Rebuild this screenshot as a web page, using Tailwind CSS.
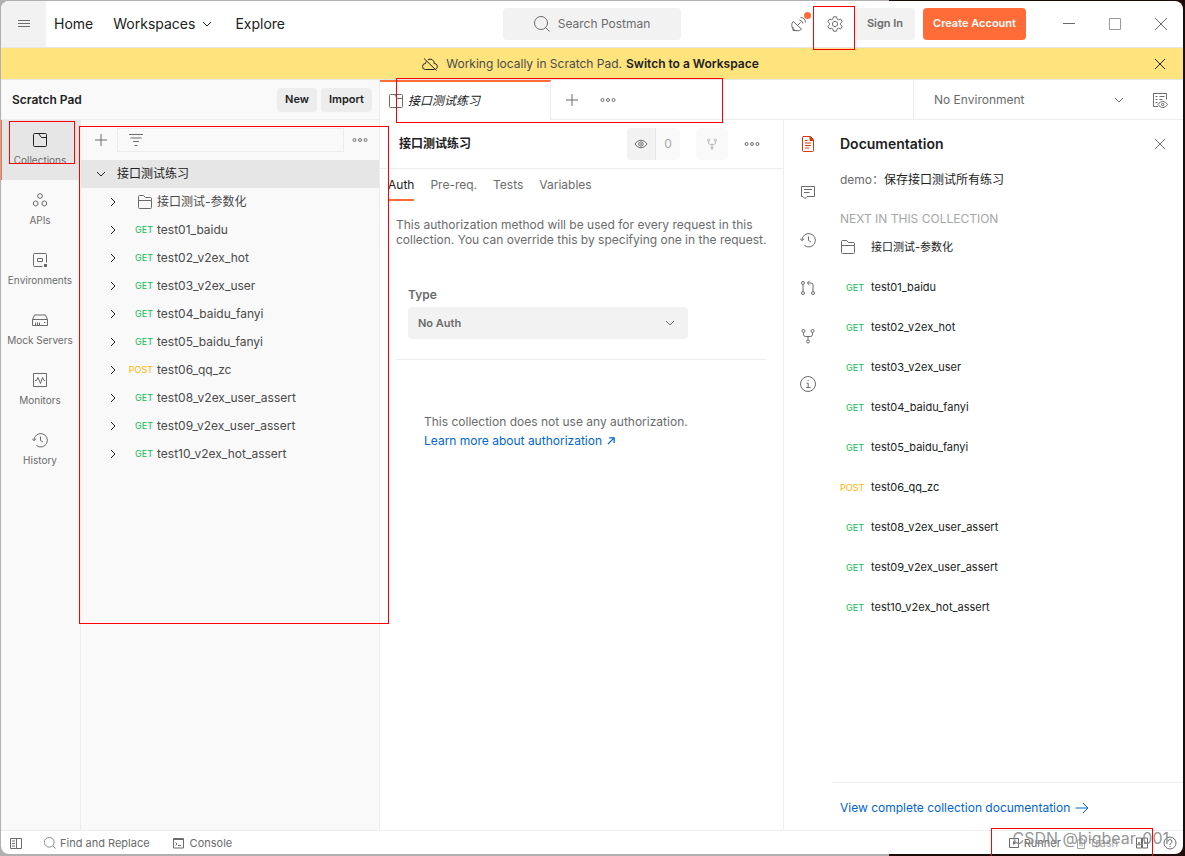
<!DOCTYPE html>
<html lang="en">
<head>
    <meta charset="UTF-8" />
    <meta name="viewport" content="width=device-width, initial-scale=1.0"/>
    <title>Scratch Pad</title>
    <script src="https://cdn.jsdelivr.net/npm/@tailwindcss/browser@4"></script>
    <style>
        body { font-family: Inter, 'Noto Sans CJK SC', sans-serif; }
        svg { fill: none; stroke: currentColor; }
    </style>
</head>
<body class="relative flex flex-col min-h-screen pt-px pl-px pr-0.5 pb-0.5 text-xs text-[#6b6b6b] bg-[linear-gradient(90deg,#b0b0b0_75%,#1d0d0a_75%)]">

    <!-- Icon set -->
    <svg class="hidden">
        <symbol id="chevron-down" viewBox="0 0 16 16"><path d="M4 6l4 4 4-4"/></symbol>
        <symbol id="chevron-right" viewBox="0 0 16 16"><path d="M6 4l4 4-4 4"/></symbol>
        <symbol id="plus" viewBox="0 0 16 16"><path d="M8 2v12M2 8h12"/></symbol>
        <symbol id="close" viewBox="0 0 16 16"><path d="M3 3l10 10M13 3L3 13"/></symbol>
        <symbol id="dots" viewBox="0 0 16 16"><circle cx="2.500" cy="8" r="1.500"/><circle cx="8" cy="8" r="1.500"/><circle cx="13.500" cy="8" r="1.500"/></symbol>
        <symbol id="search" viewBox="0 0 16 16"><circle cx="7" cy="7" r="6.500"/><path d="M11.500 11.500l4 4"/></symbol>
        <symbol id="menu" viewBox="0 0 16 16"><path d="M2 4.500h12M2 7.500h12M2 10.500h12"/></symbol>
        <symbol id="collection" viewBox="0 0 16 16"><path d="M2.500 1.500h11a1 1 0 0 1 1 1v11a1 1 0 0 1-1 1h-11a1 1 0 0 1-1-1v-11a1 1 0 0 1 1-1zM6.500 1.500l3 4h5"/></symbol>
        <symbol id="folder" viewBox="0 0 16 16"><path d="M1.500 6.500h13v7a1 1 0 0 1-1 1h-11a1 1 0 0 1-1-1v-11a1 1 0 0 1 1-1h4l2 2h5a1 1 0 0 1 1 1v2"/></symbol>
        <symbol id="apis" viewBox="0 0 16 16"><path d="M8 1.500l2.200 1.200v2.600L8 6.500 5.800 5.300V2.700zM3.700 8.800l2.200 1.200v2.800L3.700 14l-2.200-1.200V10zM12.300 8.800l2.200 1.200v2.800L12.300 14l-2.200-1.200V10z"/></symbol>
        <symbol id="environments" viewBox="0 0 16 16"><path d="M10.500 14.500h-8a1 1 0 0 1-1-1v-11a1 1 0 0 1 1-1h11a1 1 0 0 1 1 1v8M5.500 6.500h5v3h-5z"/><path d="M12 12h3v3h-3z" fill="currentColor" stroke="none"/></symbol>
        <symbol id="mock" viewBox="0 0 16 16"><path d="M.5 7.500l2-4.500h11l2 4.500v6H.5zM.5 7.500h15M3.500 13.500v-3M5.500 13.500v-3M7.500 13.500v-3M12 10.500h1.500"/></symbol>
        <symbol id="monitor" viewBox="0 0 16 16"><path d="M1.500 1.500h13v13h-13zM3 8.500h1.500l1.500-3 2.500 6 2-6 1.500 3h1"/></symbol>
        <symbol id="history" viewBox="0 0 16 16"><path d="M2 8.500A6.700 6.700 0 1 1 4.500 13.500M0 6.500l2 2.200 2.200-2M8.500 4.500V8.500l2.500 1.500"/></symbol>
        <symbol id="filter" viewBox="0 0 16 16"><path d="M1 2.500h14M2.500 6h11M5 9.500h6M6.500 13.500h3"/></symbol>
        <symbol id="cloud-off" viewBox="0 0 16 16"><path d="M4.500 5.300A3 3 0 0 0 3.500 7.500 3 3 0 0 0 3.500 13.500h9M6 3.800A4 4 0 0 1 12.200 7.500 3 3 0 0 1 14 13M2 2.500l12.500 12"/></symbol>
        <symbol id="satellite" viewBox="0 0 16 16"><path d="M2.200 5.500A5.300 5.300 0 0 0 10.500 13zM6.500 9.500l3-3M2 11v3.500h4M8.500 4A4.500 4.500 0 0 1 12 7.500M9.500 1.300A6 6 0 0 1 14.700 6.500"/></symbol>
        <symbol id="gear" viewBox="0 0 16 16"><path d="M6.500.8h3l.5 2.100 1.500.9 2.100-.7 1.500 2.600-1.600 1.500v1.600l1.600 1.500-1.500 2.600-2.100-.7-1.500.9-.5 2.100h-3L6 13.100l-1.500-.9-2.100.7-1.500-2.600 1.600-1.500V7.200L.9 5.700l1.500-2.600 2.100.7L6 2.900z"/><circle cx="8" cy="8" r="2.600"/></symbol>
        <symbol id="env-quick" viewBox="0 0 16 16"><path d="M6 14.500H1.500v-13h13v6M3.500 4.500h2M7.500 4.500h5M3.500 7.500h2M7.500 7.500h3M3.500 10.500h2M6 12.500c2.500-4 7-4 9.500 0-2.500 4-7 4-9.500 0z"/><circle cx="10.700" cy="12.500" r="1.200"/></symbol>
        <symbol id="eye" viewBox="0 0 16 16"><path d="M2 8c3-5 9-5 12 0-3 5-9 5-12 0z"/><circle cx="8" cy="8" r="2.200"/><circle cx="8" cy="8" r=".5"/></symbol>
        <symbol id="fork" viewBox="0 0 16 16"><circle cx="3.500" cy="3" r="1.500"/><circle cx="12.500" cy="3" r="1.500"/><circle cx="8" cy="13.500" r="1.500"/><path d="M3.500 4.500v2a2 2 0 0 0 2 2h5a2 2 0 0 0 2-2v-2M8 8.500V12"/></symbol>
        <symbol id="doc" viewBox="0 0 16 16"><path d="M3 .5h7.500l3 3V14.500a1 1 0 0 1-1 1H3.500a1 1 0 0 1-1-1v-13a1 1 0 0 1 .5-1zM5 4.500h2.500M5 7h6M5 9.500h6M5 12h4"/><path d="M10 .5v4h3.500z" fill="currentColor"/></symbol>
        <symbol id="comment" viewBox="0 0 16 16"><path d="M1.500 2.500h13v10H7l-2 2-2-2H1.500zM4 5.500h8M4 8.500h5.500"/></symbol>
        <symbol id="pull" viewBox="0 0 16 16"><circle cx="3" cy="3" r="1.500"/><circle cx="3" cy="13" r="1.500"/><circle cx="13" cy="13" r="1.500"/><path d="M3 4.500v7M13 11.500V5a2 2 0 0 0-2-2H7.500M9.500.8L7.300 3l2.200 2.200"/></symbol>
        <symbol id="info" viewBox="0 0 16 16"><circle cx="8" cy="8" r="7.500"/><path d="M6.500 7.200H8.200V11.500M6 11.500h4.500M7.500 4.700h1.200"/></symbol>
        <symbol id="arrow-out" viewBox="0 0 16 16"><path d="M3 13L13 3M5 3h8v8" stroke-width="2"/></symbol>
        <symbol id="arrow-right" viewBox="0 0 16 16"><path d="M1.500 8h12.500M9 3l5 5-5 5"/></symbol>
        <symbol id="sidebar" viewBox="0 0 16 16"><path d="M2.500 3.500h11v10h-11zM8.500 3.500v10M4 6h3M4 8.500h3M4 11h3"/></symbol>
        <symbol id="console" viewBox="0 0 16 16"><path d="M3.500 3.500h10v9.500h-10zM3.500 4.500h10M5.500 7.500l1.500 1.500-1.500 1.500M8 10.500h3"/></symbol>
        <symbol id="runner" viewBox="0 0 16 16"><path d="M3.500 3.500h9v9h-9z"/><path d="M7 6l3.200 2L7 10z" fill="currentColor" stroke="none"/></symbol>
        <symbol id="trash" viewBox="0 0 16 16"><path d="M4 5h8M6.500 5V3.500h3V5M4.500 5v8.500h7V5M7 7.500v4M9 7.500v4"/></symbol>
        <symbol id="panes" viewBox="0 0 16 16"><path d="M2.500 3h5v10h-5zM8.500 3h5v10h-5zM4 8h2M10 8h2M5 7v2M11 7v2"/></symbol>
        <symbol id="help" viewBox="0 0 16 16"><circle cx="8" cy="8" r="6"/><path d="M6 6.500a2 2 0 1 1 2.500 2L8 9v1M8 11v1"/></symbol>
    </svg>

    <div class="flex flex-col grow overflow-hidden rounded-lg bg-white">

        <!-- Title bar -->
        <header class="flex items-center h-[47px] shrink-0 border-b border-[#e6e6e6] text-sm text-[#212121]">
            <div class="flex flex-1 items-center h-full">
                <button class="flex items-center justify-center w-[45px] h-full bg-[#f2f2f2] text-[#6b6b6b]" aria-label="Menu"><svg class="size-4"><use href="#menu"/></svg></button>
                <nav class="flex items-center pl-2">
                    <a href="#">Home</a>
                    <a href="#" class="flex items-center gap-1 ml-5">Workspaces <svg class="size-4"><use href="#chevron-down"/></svg></a>
                    <a href="#" class="ml-5">Explore</a>
                </nav>
            </div>
            <button class="flex items-center justify-center gap-2 w-[178px] h-8 rounded bg-[#f2f2f2] text-xs text-[#6b6b6b]"><svg class="size-4"><use href="#search"/></svg>Search Postman</button>
            <div class="flex flex-1 items-center justify-end text-[#6b6b6b]">
                <button class="relative mr-5" aria-label="Capture"><svg class="size-4"><use href="#satellite"/></svg><span class="absolute -top-1 -right-1 size-[7px] rounded-full bg-[#ff6c37]"></span></button>
                <button class="mr-3" aria-label="Settings"><svg class="size-4"><use href="#gear"/></svg></button>
                <button class="w-[60px] h-8 mr-2 rounded bg-[#f2f2f2] text-[11px] font-semibold">Sign In</button>
                <button class="w-[103px] h-8 mr-[35px] rounded bg-[#ff6c37] text-[11px] font-semibold text-white">Create Account</button>
                <button class="mr-[30px]" aria-label="Minimize"><svg class="size-4"><path d="M2 7.500h12"/></svg></button>
                <button class="mr-[30px] text-[#999]" aria-label="Maximize"><svg class="size-4"><path d="M2.500 2.500h11v11h-11z"/></svg></button>
                <button class="mr-[14px]" aria-label="Close"><svg class="size-4"><path d="M2 2l12 12M14 2L2 14"/></svg></button>
            </div>
        </header>

        <!-- Scratch pad notice -->
        <div class="flex items-center h-8 shrink-0 border-b border-[#e6e6e6] bg-[#ffe47e] text-[#212121]">
            <p class="flex flex-1 items-center justify-center pl-7 text-[#4a4a4a]"><svg class="size-4 mr-2 text-[#212121]"><use href="#cloud-off"/></svg>Working locally in Scratch Pad.<a href="#" class="ml-1 font-semibold text-[#212121]">Switch to a Workspace</a></p>
            <button class="mr-[15px]" aria-label="Dismiss"><svg class="size-4"><use href="#close"/></svg></button>
        </div>

        <div class="flex grow">
            <!-- Sidebar -->
            <aside class="flex flex-col w-[379px] shrink-0 border-r border-[#ededed] bg-[#f9f9f9]">
                <div class="flex items-center h-10 pl-[11px] pr-[7px] gap-1 border-b border-[#ededed] text-[#212121]">
                    <h1 class="grow font-semibold">Scratch Pad</h1>
                    <button class="w-10 h-6 rounded bg-[#ededed] text-[11px] font-semibold">New</button>
                    <button class="w-[51px] h-6 rounded bg-[#ededed] text-[11px] font-semibold">Import</button>
                </div>
                <div class="flex grow">
                    <nav id="rail" class="w-20 shrink-0 border-r border-[#ededed] text-[10px]"></nav>
                    <div class="grow">
                        <div class="flex items-center h-10 pl-3 pr-[11px]">
                            <button aria-label="Add"><svg class="size-4"><use href="#plus"/></svg></button>
                            <label class="relative grow mx-2">
                                <svg class="absolute top-1 left-[11px] size-4"><use href="#filter"/></svg>
                                <input type="text" aria-label="Filter collections" class="block w-full h-6 pl-9 border border-[#ededed] bg-transparent">
                            </label>
                            <button aria-label="More"><svg class="size-4"><use href="#dots"/></svg></button>
                        </div>
                        <div class="flex items-center h-7 pl-3 bg-[#e6e6e6] text-[#212121]"><svg class="size-4 mr-2"><use href="#chevron-down"/></svg>接口测试练习</div>
                        <ul id="tree" class="text-[#4a4a4a]"></ul>
                    </div>
                </div>
            </aside>

            <div class="flex flex-col grow">
                <!-- Tab bar -->
                <div class="flex h-10 shrink-0">
                    <a href="#" class="flex items-center gap-1 w-[171px] pl-2 border-t-2 border-t-[#ff6c37] border-r border-r-[#ededed] italic text-[#212121]"><svg class="size-4 text-[#6b6b6b]"><use href="#collection"/></svg>接口测试练习</a>
                    <div class="flex grow items-center gap-5 pl-[13px] border-b border-[#ededed]">
                        <button aria-label="New tab"><svg class="size-4"><use href="#plus"/></svg></button>
                        <button aria-label="Tab options"><svg class="size-4"><use href="#dots"/></svg></button>
                    </div>
                    <div class="flex items-center w-[270px] border-l border-b border-[#ededed]">
                        <div class="relative grow">
                            <select aria-label="Environment" class="appearance-none w-full h-8 pl-5"><option>No Environment</option></select>
                            <svg class="absolute top-2 right-[10px] size-4 pointer-events-none"><use href="#chevron-down"/></svg>
                        </div>
                        <button class="mx-[15px]" aria-label="Environment quick look"><svg class="size-4"><use href="#env-quick"/></svg></button>
                    </div>
                </div>

                <div class="flex grow">
                    <!-- Collection -->
                    <main class="grow">
                        <div class="flex items-center h-[49px] pl-[19px] pr-[23px] border-b border-[#ededed]">
                            <h2 class="grow font-bold text-[#212121]">接口测试练习</h2>
                            <button class="flex items-center justify-center w-[29px] h-8 rounded-l border-r border-[#e6e6e6] bg-[#f2f2f2]" aria-label="Watch"><svg class="size-4"><use href="#eye"/></svg></button>
                            <span class="flex items-center justify-center w-6 h-8 mr-4 rounded-r bg-[#f9f9f9] text-[#a6a6a6]">0</span>
                            <button class="flex items-center justify-center w-8 h-8 mr-4 rounded bg-[#f9f9f9] text-[#a6a6a6]" aria-label="Fork"><svg class="size-3"><use href="#fork"/></svg></button>
                            <button aria-label="More actions"><svg class="size-4"><use href="#dots"/></svg></button>
                        </div>
                        <nav class="flex gap-4 h-8 pl-2 leading-8">
                            <a href="#" class="border-b-2 border-[#ff6c37] text-[#212121]">Auth</a>
                            <a href="#">Pre-req.</a>
                            <a href="#">Tests</a>
                            <a href="#">Variables</a>
                        </nav>
                        <p class="w-[380px] mt-4 ml-4 leading-[15px]">This authorization method will be used for every request in this collection. You can override this by specifying one in the request.</p>
                        <div class="mx-4 mt-9 pl-3 pb-5 border-b border-[#ededed]">
                            <label for="auth-type" class="block font-semibold leading-6">Type</label>
                            <div class="relative w-[280px]">
                                <select id="auth-type" class="appearance-none block w-full h-8 pl-[10px] rounded bg-[#f2f2f2] text-[11px] font-semibold"><option>No Auth</option></select>
                                <svg class="absolute top-2 right-[10px] size-4 pointer-events-none"><use href="#chevron-down"/></svg>
                            </div>
                        </div>
                        <div class="mt-[52px] pl-11 leading-[19px]">
                            <p>This collection does not use any authorization.</p>
                            <a href="#" class="flex items-center gap-1 text-[#0265d2]">Learn more about authorization <svg class="size-[10px]"><use href="#arrow-out"/></svg></a>
                        </div>
                    </main>

                    <!-- Documentation -->
                    <section class="flex w-[400px] shrink-0 border-l border-[#ededed]">
                        <nav class="flex flex-col gap-8 w-12 pt-4 items-center">
                            <button class="text-[#d13a0a]" aria-label="Documentation"><svg class="size-4"><use href="#doc"/></svg></button>
                            <button aria-label="Comments"><svg class="size-4"><use href="#comment"/></svg></button>
                            <button aria-label="Changelog"><svg class="size-4"><use href="#history"/></svg></button>
                            <button aria-label="Pull requests"><svg class="size-4"><use href="#pull"/></svg></button>
                            <button aria-label="Forks"><svg class="size-4"><use href="#fork"/></svg></button>
                            <button aria-label="Info"><svg class="size-4"><use href="#info"/></svg></button>
                        </nav>
                        <div class="flex flex-col grow">
                            <div class="grow pl-2">
                                <div class="flex items-center justify-between h-12 pr-[15px]">
                                    <h2 class="text-sm font-semibold text-[#212121]">Documentation</h2>
                                    <button aria-label="Close panel"><svg class="size-4"><use href="#close"/></svg></button>
                                </div>
                                <p class="leading-6">demo：<span class="text-[#212121]">保存接口测试所有练习</span></p>
                                <h3 class="mt-[15px] leading-6 text-[#a6a6a6]">NEXT IN THIS COLLECTION</h3>
                                <ul id="next" class="text-[11px] text-[#212121]"></ul>
                            </div>
                            <a href="#" class="flex items-center gap-1 h-12 pl-2 pt-0.5 border-t border-[#ededed] text-[#0265d2]">View complete collection documentation <svg class="size-4"><use href="#arrow-right"/></svg></a>
                        </div>
                    </section>
                </div>
            </div>
        </div>

        <!-- Status bar -->
        <footer class="flex items-center h-6 shrink-0 pt-px pl-[7px] pr-[5px] border-t border-[#ededed] text-[11px]">
            <button aria-label="Toggle sidebar"><svg class="size-4"><use href="#sidebar"/></svg></button>
            <button class="flex items-center gap-1 ml-5"><svg class="size-3"><use href="#search"/></svg>Find and Replace</button>
            <button class="flex items-center gap-1 ml-5"><svg class="size-4"><use href="#console"/></svg>Console</button>
            <button class="flex items-center gap-0.5 ml-auto"><svg class="size-4"><use href="#runner"/></svg>Runner</button>
            <button class="flex items-center ml-3 text-[#a6a6a6]"><svg class="size-4"><use href="#trash"/></svg>Trash</button>
            <button class="ml-4" aria-label="Two pane view"><svg class="size-4"><use href="#panes"/></svg></button>
            <button class="ml-3" aria-label="Help"><svg class="size-4"><use href="#help"/></svg></button>
        </footer>
    </div>

    <!-- Highlight frames and watermark -->
    <div class="absolute left-[9px] top-[121px] w-[66px] h-[43px] border border-[#f00] pointer-events-none"></div>
    <div class="absolute left-[79px] top-[126px] w-[310px] h-[498px] border border-[#f00] pointer-events-none"></div>
    <div class="absolute left-[396px] top-[78px] w-[327px] h-[45px] border border-[#f00] pointer-events-none"></div>
    <div class="absolute right-[330px] top-[6px] w-[42px] h-[44px] border border-[#f00] pointer-events-none"></div>
    <div class="absolute right-8 bottom-0 w-[162px] h-7 border border-b-0 border-[#f00] pointer-events-none"></div>
    <div class="absolute right-4 bottom-2 text-base leading-5 text-[#888]/90 pointer-events-none">CSDN @bigbear_001</div>

    <script>
        const sections = [
            ["collection", "Collections"],
            ["apis", "APIs"],
            ["environments", "Environments"],
            ["mock", "Mock Servers"],
            ["monitor", "Monitors"],
            ["history", "History"]
        ];

        const requests = [
            ["", "接口测试-参数化"],
            ["GET", "test01_baidu"],
            ["GET", "test02_v2ex_hot"],
            ["GET", "test03_v2ex_user"],
            ["GET", "test04_baidu_fanyi"],
            ["GET", "test05_baidu_fanyi"],
            ["POST", "test06_qq_zc"],
            ["GET", "test08_v2ex_user_assert"],
            ["GET", "test09_v2ex_user_assert"],
            ["GET", "test10_v2ex_hot_assert"]
        ];

        const folder = `<svg class="size-4 shrink-0 text-[#6b6b6b]"><use href="#folder"/></svg>`;

        document.getElementById('rail').innerHTML = sections.map(([icon, name], idx) => `
            <a href="#" class="flex flex-col items-center gap-1 h-[60px] pt-3 pr-0.5 leading-4 border-l ${idx === 0 ? 'border-[#ff6c37] bg-[#e6e6e6]' : 'border-transparent'}">
                <svg class="size-4 ${idx === 0 ? 'text-[#212121]' : ''}"><use href="#${icon}"/></svg>${name}
            </a>
        `).join('');

        document.getElementById('tree').innerHTML = requests.map(([method, name]) => `
            <li class="flex items-center h-7 pl-6">
                <svg class="size-4 text-[#212121]"><use href="#chevron-right"/></svg>
                <span class="flex justify-end w-8 mr-1 text-[9px] ${method === 'POST' ? 'text-[#ffb400]' : 'text-[#0cbb52]'}">${method || folder}</span>
                ${name}
            </li>
        `).join('');

        document.getElementById('next').innerHTML = requests.map(([method, name]) => `
            <li class="flex items-start h-10 pt-2 leading-4">
                ${method ? `<span class="w-6 mr-[7px] pt-px text-right text-[9px] ${method === 'POST' ? 'text-[#ffb400]' : 'text-[#0cbb52]'}">${method}</span>` : `<span class="w-6 mr-[7px]">${folder}</span>`}
                ${name}
            </li>
        `).join('');
    </script>
</body>
</html>
